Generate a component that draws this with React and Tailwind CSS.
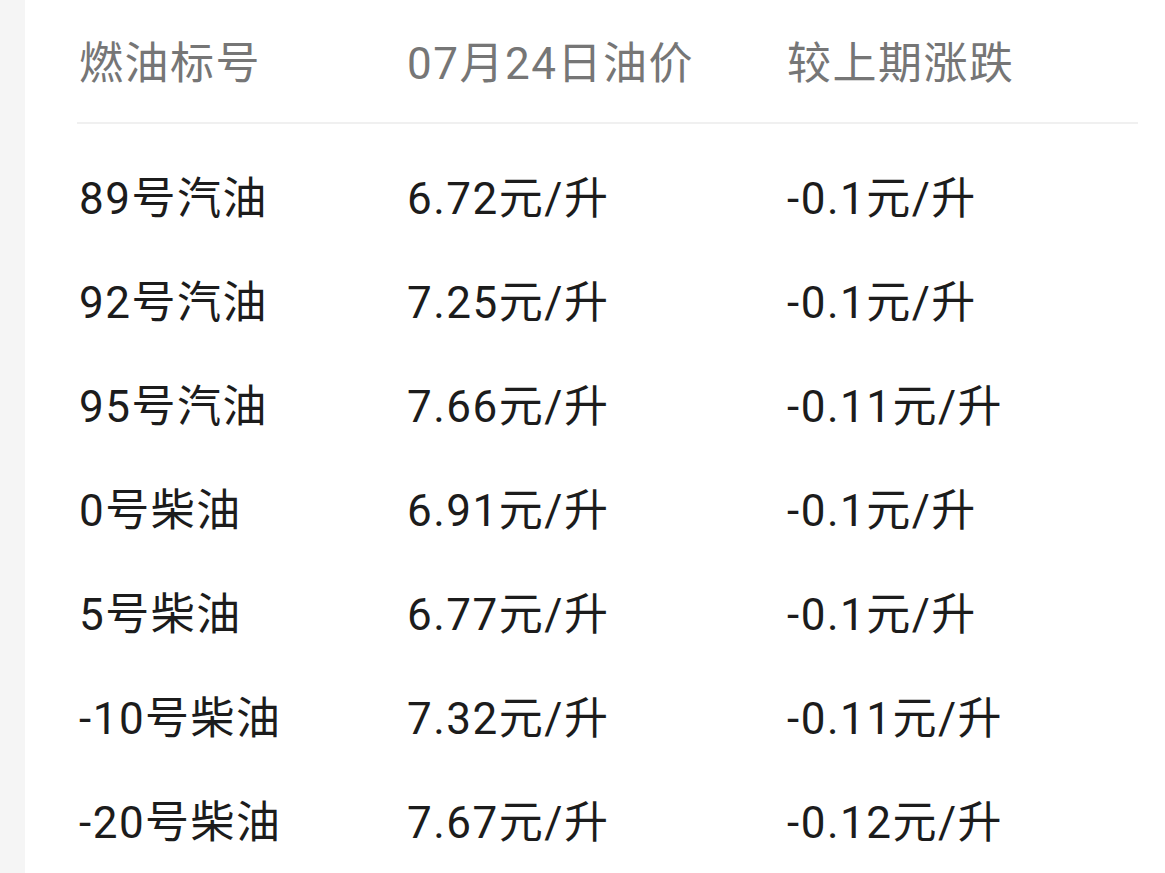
const rows = [
  ["89号汽油", "6.72元/升", "-0.1元/升"],
  ["92号汽油", "7.25元/升", "-0.1元/升"],
  ["95号汽油", "7.66元/升", "-0.11元/升"],
  ["0号柴油", "6.91元/升", "-0.1元/升"],
  ["5号柴油", "6.77元/升", "-0.1元/升"],
  ["-10号柴油", "7.32元/升", "-0.11元/升"],
  ["-20号柴油", "7.67元/升", "-0.12元/升"],
];

export default function App() {
  return (
    <div
      className="flex w-[1165px] h-[873px] overflow-hidden bg-white"
      style={{ fontFamily: 'Roboto, "Noto Sans CJK SC", sans-serif' }}
    >
      {/* left gutter */}
      <div className="w-[25px] shrink-0 bg-[#f5f5f5]" />

      <div className="flex-1 pl-[52px] pr-[27px]">
        {/* header */}
        <div className="flex h-[124px] pt-[6px] items-center border-b-2 border-[#f0f0f0] text-[44px] tracking-[1.5px] text-[#767676]">
          <div className="w-[330px] pl-[2px]">燃油标号</div>
          <div className="w-[380px]">07月24日油价</div>
          <div>较上期涨跌</div>
        </div>

        {/* body */}
        <div className="pt-[23px]">
          {rows.map(([name, price, diff]) => (
            <div
              key={name}
              className="flex h-[104px] items-center text-[44px] tracking-[1.5px] text-[#1c1c1c]"
            >
              <div className="w-[330px] pl-[2px]">{name}</div>
              <div className="w-[380px]">{price}</div>
              <div>{diff}</div>
            </div>
          ))}
        </div>
      </div>
    </div>
  );
}
